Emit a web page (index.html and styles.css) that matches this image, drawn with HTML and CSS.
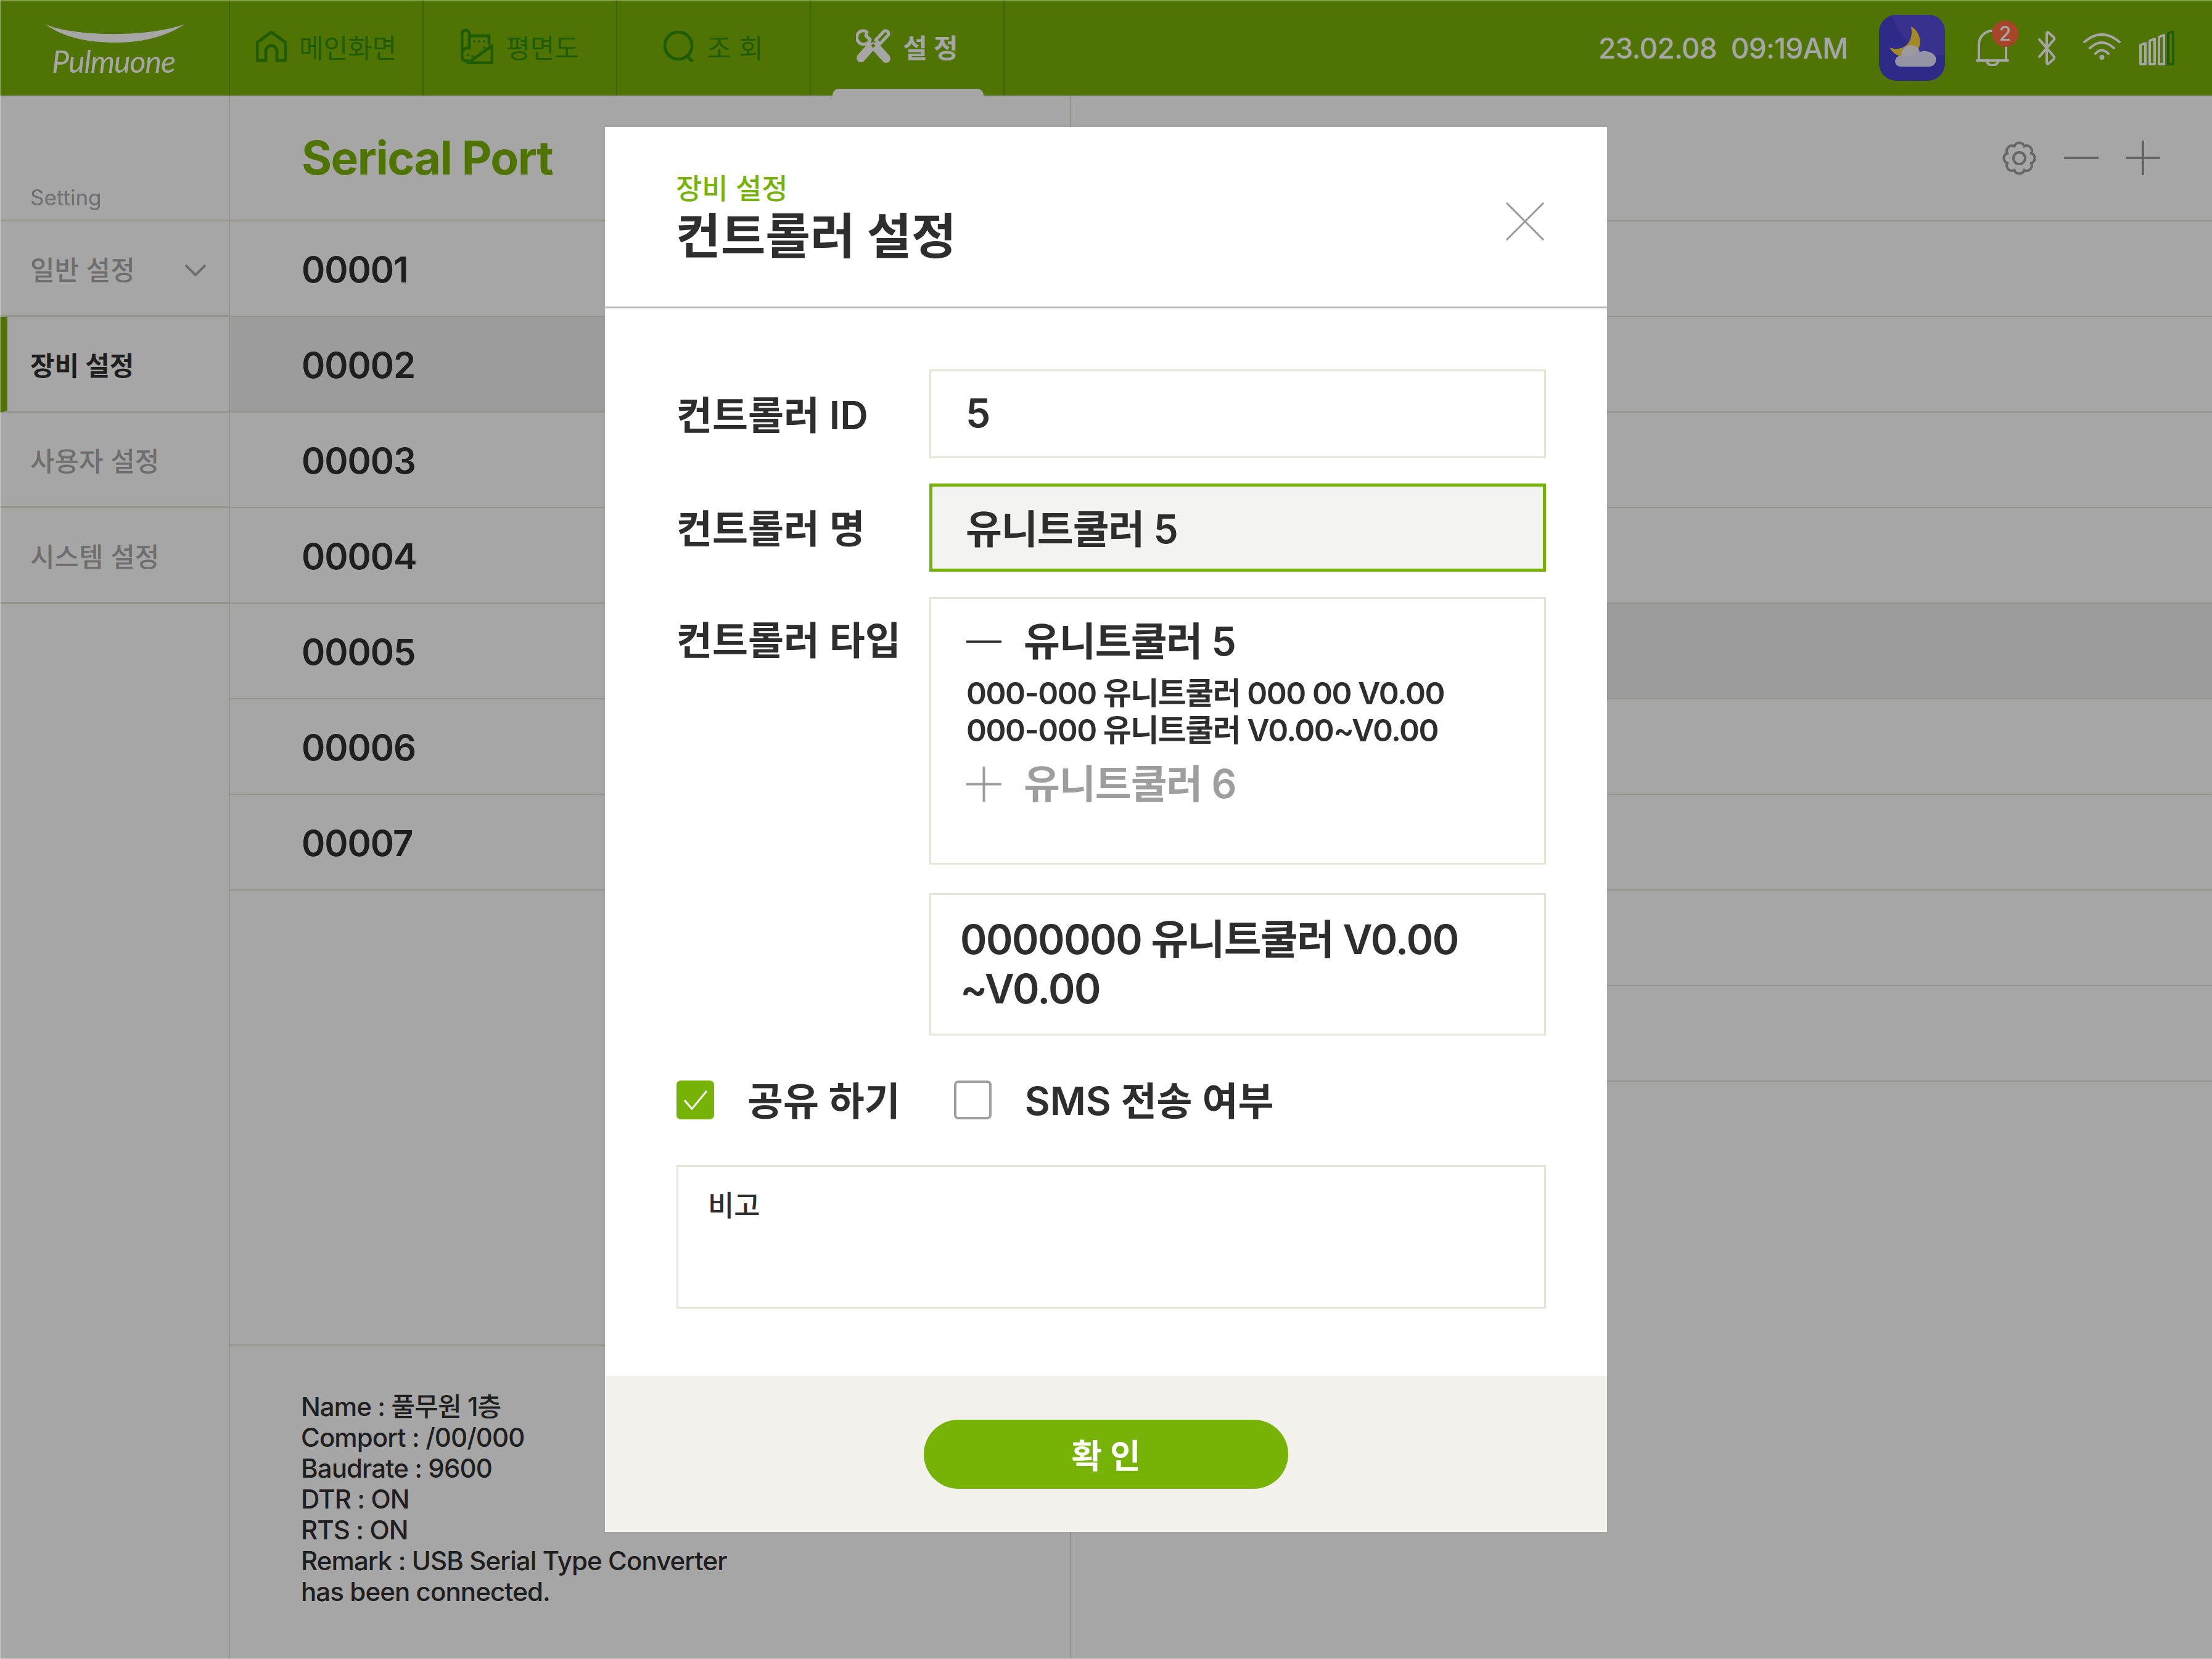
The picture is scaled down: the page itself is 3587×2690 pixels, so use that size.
FILE: index.html
```html
<!DOCTYPE html>
<html lang="ko">
<head>
    <meta charset="UTF-8">
    <meta name="viewport" content="width=device-width, initial-scale=1.0">
    <link rel="stylesheet" href="styles.css">
    <title>컨트롤러 설정</title>
</head>
<body>

<div class="app">
    <header class="topbar">
        <div class="logo">
            <svg class="logo-smile" viewBox="0 0 227 30"><path d="M0 0C40 19 160 24 227 0C190 24 150 30 113 30C70 30 30 22 0 0Z"/></svg>
            <span class="logo-text">Pulmuone</span>
        </div>

        <nav class="nav">
            <a class="nav-item">
                <svg class="nav-icon" width="50" height="50" viewBox="0 0 50 50"><path d="M2 48V19L25 2L48 19V48H34V33a9 9 0 0 0-18 0V48Z"/></svg>
                <span>메인화면</span>
            </a>
            <a class="nav-item">
                <svg class="nav-icon" width="53" height="58" viewBox="0 0 53 58">
                    <path d="M2 48V9a6 6 0 0 1 12 0V32M14 32c-6-1-12 2-12 8M2 46q1 7 9 7h5M14 12H46V25M51 28L12 56H51Z"/>
                    <g class="nav-dots"><circle cx="22" cy="21" r="2"/><circle cx="30" cy="21" r="2"/><circle cx="38" cy="21" r="2"/><circle cx="38" cy="31" r="2"/><circle cx="12" cy="43" r="2"/><circle cx="19" cy="45" r="2"/></g>
                </svg>
                <span>평면도</span>
            </a>
            <a class="nav-item">
                <svg class="nav-icon" width="50" height="50" viewBox="0 0 50 50"><circle cx="24" cy="24" r="22"/><path d="M38 41L46 49"/></svg>
                <span>조 회</span>
            </a>
            <a class="nav-item active">
                <svg width="56" height="56" viewBox="0 0 56 56">
                    <path class="tool-line" d="M10 3A11 11 0 1 0 23 17L16 11L18 5Q14 2 10 3Z"/>
                    <path class="tool-line" d="M32 18L46 3Q53 2 53 9L39 24Z"/>
                    <path class="tool-fill" d="M8 47L24 29M49 48L32 29"/>
                    <path class="tool-gap" d="M28 22L33 27L28 32L23 27Z"/>
                </svg>
                <span>설 정</span>
            </a>
        </nav>

        <div class="status">
            <span class="clock">23.02.08&nbsp; 09:19AM</span>
            <svg class="weather" width="107" height="107" viewBox="0 0 107 107">
                <rect width="107" height="107" rx="28" fill="#4541d1"/>
                <path d="M20 0H79C97 0 107 12 107 28V64C70 72 40 50 20 0Z" fill="#564edc"/>
                <path d="M52 19C68 27 72 52 58 62C48 70 28 72 17 53C34 60 58 50 52 19Z" fill="#fbd53c"/>
                <path d="M36 84C22 84 24 66 36 66C36 46 62 44 66 60C82 56 96 66 92 76C90 82 86 84 80 84Z" fill="#f1f1ff" fill-opacity=".93"/>
            </svg>
            <div class="bell">
                <svg class="status-icon" width="54" height="59" viewBox="0 0 54 59"><path d="M5 50V24a22 22 0 0 1 44 0V50M2 50H52M18 51a9 7 0 0 0 18 0"/></svg>
                <span class="badge">2</span>
            </div>
            <svg class="status-icon" width="29" height="56" viewBox="0 0 29 56"><path d="M2 14L26 42Q27 44 25 46L17 53Q14 55 14 51V5Q14 1 17 3L25 10Q27 12 26 14L2 42"/></svg>
            <svg class="status-icon wifi" width="61" height="44" viewBox="0 0 61 44"><path d="M2 14Q30-10 59 14M11 24Q30 6 50 24M20 33Q30 22 41 33"/><circle class="wifi-dot" cx="30.500" cy="39" r="4"/></svg>
            <svg class="status-icon" width="57" height="56" viewBox="0 0 57 56">
                <path d="M2 23L10 20V54H2ZM17 16L25 13V54H17ZM32 10L40 7V54H32Z"/>
                <path class="bar-off" d="M47 4L55 1V54H47Z"/>
            </svg>
        </div>
    </header>

    <main class="content">
        <aside class="sidebar">
            <div class="side-title">Setting</div>
            <div class="side-item">
                <span>일반 설정</span>
                <svg class="chevron" width="36" height="20" viewBox="0 0 36 20"><path d="M2 2L18 18L34 2"/></svg>
            </div>
            <div class="side-item current">장비 설정</div>
            <div class="side-item">사용자 설정</div>
            <div class="side-item">시스템 설정</div>
        </aside>

        <section class="ports">
            <h1 class="ports-title">Serical Port</h1>
            <div class="port-list">
                <div class="row">00001</div>
                <div class="row selected">00002</div>
                <div class="row">00003</div>
                <div class="row">00004</div>
                <div class="row">00005</div>
                <div class="row">00006</div>
                <div class="row">00007</div>
            </div>
            <div class="port-info">
                Name : 풀무원 1층<br>
                Comport : /00/000<br>
                Baudrate : 9600<br>
                DTR : ON<br>
                RTS : ON<br>
                Remark : USB Serial Type Converter<br>
                has been connected.
            </div>
        </section>

        <section class="detail">
            <div class="detail-head">
                <svg class="tool-icon" width="57" height="55" viewBox="0 0 57 55">
                    <path d="M47.900 19.500A8.500 8.500 0 0 1 47.900 35.500A8.500 8.500 0 0 1 36.500 46.900A8.500 8.500 0 0 1 20.500 46.900A8.500 8.500 0 0 1 9.100 35.500A8.500 8.500 0 0 1 9.100 19.500A8.500 8.500 0 0 1 20.500 8.100A8.500 8.500 0 0 1 36.500 8.100A8.500 8.500 0 0 1 47.900 19.500Z"/>
                    <circle cx="28.500" cy="27.500" r="9.500"/>
                </svg>
                <svg class="tool-icon" width="56" height="56" viewBox="0 0 56 56"><path d="M0 28H56"/></svg>
                <svg class="tool-icon" width="56" height="56" viewBox="0 0 56 56"><path d="M0 28H56M28 0V56"/></svg>
            </div>
            <div class="row"></div>
            <div class="row"></div>
            <div class="row"></div>
            <div class="row"></div>
            <div class="row selected"></div>
            <div class="row"></div>
            <div class="row"></div>
            <div class="row"></div>
            <div class="row"></div>
        </section>
    </main>
</div>

<div class="overlay">
    <div class="modal">
        <div class="modal-head">
            <div>
                <div class="modal-sub">장비 설정</div>
                <div class="modal-title">컨트롤러 설정</div>
            </div>
            <svg class="close" width="62" height="62" viewBox="0 0 62 62"><path d="M1 1L61 61M61 1L1 61"/></svg>
        </div>

        <div class="modal-body">
            <div class="form-row">
                <label class="form-label">컨트롤러 ID</label>
                <div class="field">5</div>
            </div>
            <div class="form-row">
                <label class="form-label">컨트롤러 명</label>
                <div class="field focus">유니트쿨러 5</div>
            </div>
            <div class="form-row">
                <label class="form-label type-label">컨트롤러 타입</label>
                <div class="type-box">
                    <div class="type-group">
                        <svg class="type-icon" width="57" height="57" viewBox="0 0 57 57"><path d="M0 28.500H57"/></svg>
                        <span>유니트쿨러 5</span>
                    </div>
                    <div class="type-sub">000-000 유니트쿨러 000 00 V0.00</div>
                    <div class="type-sub">000-000 유니트쿨러 V0.00~V0.00</div>
                    <div class="type-group closed">
                        <svg class="type-icon" width="57" height="57" viewBox="0 0 57 57"><path d="M0 28.500H57M28.500 0V57"/></svg>
                        <span>유니트쿨러 6</span>
                    </div>
                </div>
            </div>
            <div class="form-row picked-row">
                <span></span>
                <div class="picked">0000000 유니트쿨러 V0.00<br>~V0.00</div>
            </div>

            <div class="checks">
                <div class="check-item">
                    <span class="checkbox on">
                        <svg width="61" height="63" viewBox="0 0 61 63"><path d="M13 32L25 46L49 17"/></svg>
                    </span>
                    <span>공유 하기</span>
                </div>
                <div class="check-item">
                    <span class="checkbox"></span>
                    <span>SMS 전송 여부</span>
                </div>
            </div>

            <div class="note">비고</div>
        </div>

        <div class="modal-foot">
            <button class="confirm">확 인</button>
        </div>
    </div>
</div>

</body>
</html>
```

FILE: styles.css
```css
* {
    box-sizing: border-box;
}

body {
    margin: 0;
    width: 3587px;
    height: 2690px;
    overflow: hidden;
    background: #fff;
    color: #303030;
    font-family: Inter, "Noto Sans CJK KR", sans-serif;
}

.app {
    display: flex;
    flex-direction: column;
    height: 2690px;
}

/* Top bar */
.topbar {
    display: flex;
    align-items: stretch;
    height: 155px;
    background: #7ab307;
    color: #fff;
}

.logo {
    width: 373px;
    padding-top: 39px;
    padding-left: 73px;
    border-right: 2px solid #5f9a05;
}

.logo-smile {
    display: block;
    width: 227px;
    height: 30px;
    fill: #fff;
}

.logo-text {
    display: block;
    margin-left: 11px;
    font-family: Lato, sans-serif;
    font-style: italic;
    font-size: 50px;
    letter-spacing: -1px;
    line-height: 60px;
}

.nav {
    display: flex;
}

.nav-item {
    position: relative;
    display: flex;
    align-items: center;
    justify-content: center;
    gap: 20px;
    width: 314px;
    padding-bottom: 5px;
    border-right: 2px solid #5f9a05;
    color: #308e00;
    font-size: 43px;
}

.nav-icon path,
.nav-icon circle {
    fill: none;
    stroke: #308e00;
    stroke-width: 5;
    stroke-linecap: round;
    stroke-linejoin: round;
}

.nav-icon .nav-dots circle {
    fill: #308e00;
    stroke: none;
}

.nav-item.active {
    color: #fff;
    font-weight: 700;
}

.nav-item.active::after {
    content: "";
    position: absolute;
    left: 35px;
    bottom: 0;
    width: 245px;
    height: 11px;
    border-radius: 10px 10px 0 0;
    background: #fff;
}

.tool-line {
    fill: none;
    stroke: #fff;
    stroke-width: 5;
    stroke-linejoin: round;
}

.tool-fill {
    fill: none;
    stroke: #fff;
    stroke-width: 14;
    stroke-linecap: round;
}

.tool-gap {
    fill: #7ab307;
    stroke: #fff;
    stroke-width: 2;
}

.status {
    flex: 1;
    display: flex;
    align-items: center;
    padding-left: 963px;
}

.clock {
    width: 455px;
    font-size: 46px;
    font-weight: 500;
    letter-spacing: -0.8px;
    white-space: nowrap;
}

.weather {
    margin-right: 50px;
}

.bell {
    position: relative;
    width: 54px;
    height: 59px;
    margin-top: -2px;
    margin-right: 47px;
}

.status-icon {
    display: block;
    margin-top: 1px;
}

.status-icon path {
    fill: none;
    stroke: #fff;
    stroke-width: 4;
    stroke-linecap: round;
    stroke-linejoin: round;
}

.status-icon .bar-off {
    stroke: #308e00;
}

.wifi {
    margin-left: 44px;
    margin-right: 30px;
    margin-bottom: 4px;
}

.wifi-dot {
    fill: #fff;
}

.badge {
    position: absolute;
    left: 26px;
    top: -14px;
    display: flex;
    align-items: center;
    justify-content: center;
    width: 43px;
    height: 43px;
    border-radius: 50%;
    background: #ff6b3e;
    color: #fff;
    font-size: 32px;
    font-weight: 500;
}

/* Page under the dialog */
.content {
    flex: 1;
    display: flex;
    min-height: 0;
}

.sidebar {
    width: 373px;
    border-right: 2px solid #e2e2d6;
}

.side-title {
    display: flex;
    align-items: flex-end;
    height: 204px;
    padding-left: 49px;
    padding-bottom: 15px;
    border-bottom: 3px solid #e2e2d6;
    color: #aaa;
    font-size: 35px;
}

.side-item {
    display: flex;
    align-items: center;
    justify-content: space-between;
    height: 155px;
    padding: 0 36px 0 49px;
    border-bottom: 3px solid #e2e2d6;
    color: #aaa;
    font-size: 43px;
    font-weight: 500;
}

.side-item.current {
    border-left: 12px solid #7ab307;
    padding-left: 37px;
    color: #303030;
    font-weight: 700;
}

.chevron {
    margin-top: 6px;
}

.chevron path {
    fill: none;
    stroke: #aaa;
    stroke-width: 4;
}

.ports {
    display: flex;
    flex-direction: column;
    width: 1364px;
    border-right: 2px solid #e2e2d6;
}

.ports-title {
    display: flex;
    align-items: center;
    height: 204px;
    margin: 0;
    padding-left: 116px;
    border-bottom: 3px solid #e2e2d6;
    color: #7ab307;
    font-size: 75px;
    font-weight: 700;
    letter-spacing: -1.5px;
}

.port-list {
    flex: 1;
}

.row {
    display: flex;
    align-items: center;
    height: 155px;
    padding-top: 2px;
    padding-left: 116px;
    border-bottom: 2px solid #e2e2d6;
    font-size: 58px;
    font-weight: 600;
    letter-spacing: -1px;
}

.row.selected {
    background: #f0f0f0;
}

.port-info {
    height: 510px;
    padding: 73px 0 0 115px;
    border-top: 3px solid #e2e2d6;
    font-size: 42px;
    font-weight: 500;
    letter-spacing: -0.9px;
    line-height: 50px;
}

.detail {
    flex: 1;
}

.detail-head {
    display: flex;
    align-items: center;
    justify-content: flex-end;
    gap: 44px;
    height: 204px;
    padding-right: 84px;
    border-bottom: 2px solid #e2e2d6;
}

.tool-icon path,
.tool-icon circle {
    fill: none;
    stroke: #9d9d9d;
    stroke-width: 4;
    stroke-linecap: round;
}

/* Dialog */
.overlay {
    position: absolute;
    inset: 0;
    display: flex;
    justify-content: center;
    padding-top: 206px;
    background: rgba(0, 0, 0, 0.35);
    box-shadow: inset 1px 1px 0 rgba(255, 255, 255, 0.4), inset 0 -1px 0 rgba(255, 255, 255, 0.4);
}

.modal {
    width: 1625px;
    height: 2278px;
    background: #fff;
    display: flex;
    flex-direction: column;
}

.modal-head {
    display: flex;
    align-items: flex-start;
    justify-content: space-between;
    height: 294px;
    padding: 71px 102px 0 115px;
    border-bottom: 3px solid #b8b8b8;
}

.modal-sub {
    color: #76b306;
    font-size: 46px;
    font-weight: 500;
    line-height: 56px;
}

.modal-title {
    margin-top: 1px;
    font-size: 79px;
    font-weight: 700;
    line-height: 98px;
    color: #2e2e2e;
}

.close {
    margin-top: 51px;
}

.close path {
    stroke: #999;
    stroke-width: 3;
}

.modal-body {
    flex: 1;
    padding: 99px 99px 0 116px;
    color: #2e2e2e;
}

.form-row {
    display: grid;
    grid-template-columns: 410px 1000px;
    align-items: center;
    margin-bottom: 41px;
}

.form-label {
    padding-bottom: 6px;
    font-size: 63px;
    font-weight: 600;
}

.type-label {
    align-self: start;
    margin-top: 20px;
    padding-bottom: 0;
}

.field {
    display: flex;
    align-items: center;
    height: 144px;
    padding-left: 56px;
    padding-bottom: 3px;
    border: 3px solid #e5e5da;
    font-size: 64px;
    font-weight: 600;
    letter-spacing: -1px;
}

.field.focus {
    height: 143px;
    padding-bottom: 6px;
    padding-left: 54px;
    border: 5px solid #76b306;
    background: #f3f3f1;
}

.type-box {
    height: 434px;
    padding: 32px 0 0 57px;
    border: 3px solid #e5e5da;
}

.type-group {
    display: flex;
    align-items: center;
    gap: 36px;
    font-size: 64px;
    font-weight: 600;
    letter-spacing: -1px;
    line-height: 74px;
}

.type-icon path {
    stroke: #2e2e2e;
    stroke-width: 4;
}

.type-group.closed {
    margin-top: 20px;
    color: #9e9e9e;
}

.type-group.closed .type-icon path {
    stroke: #9e9e9e;
}

.type-sub {
    font-size: 50px;
    font-weight: 600;
    letter-spacing: -1.5px;
    line-height: 60px;
}

.type-group + .type-sub {
    margin-top: 17px;
}

.picked-row {
    margin-bottom: 73px;
    margin-top: 46px;
}

.picked {
    height: 231px;
    padding: 32px 0 0 47px;
    border: 3px solid #e5e5da;
    font-size: 66px;
    font-weight: 600;
    letter-spacing: -1.5px;
    line-height: 80px;
}

.checks {
    display: flex;
    gap: 87px;
    margin-bottom: 74px;
}

.check-item {
    display: flex;
    align-items: center;
    gap: 54px;
    height: 63px;
    font-size: 63px;
    font-weight: 600;
}

.check-item > span:last-child {
    margin-bottom: 6px;
}

.checkbox {
    display: block;
    width: 61px;
    height: 63px;
    border: 4px solid #a0a0a0;
    border-radius: 7px;
}

.checkbox.on {
    border: 0;
    background: #76b306;
}

.checkbox svg {
    display: block;
}

.checkbox path {
    fill: none;
    stroke: #fff;
    stroke-width: 3;
}

.note {
    height: 233px;
    padding: 26px 0 0 48px;
    border: 3px solid #e5e5da;
    font-size: 46px;
    font-weight: 500;
}

.modal-foot {
    display: flex;
    align-items: center;
    justify-content: center;
    height: 253px;
    background: #f2f1ec;
}

.confirm {
    width: 591px;
    height: 112px;
    border: 0;
    border-radius: 56px;
    background: #76b306;
    color: #fff;
    font-family: inherit;
    font-size: 54px;
    font-weight: 700;
}
```
